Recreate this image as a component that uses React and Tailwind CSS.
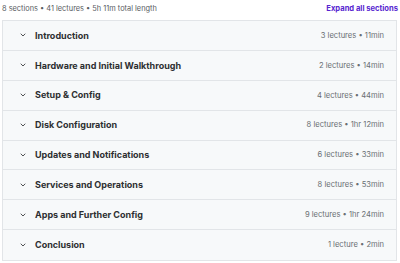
import { ChevronDown } from 'lucide-react';

const sections = [
  { title: 'Introduction', meta: '3 lectures • 11min' },
  { title: 'Hardware and Initial Walkthrough', meta: '2 lectures • 14min' },
  { title: 'Setup & Config', meta: '4 lectures • 44min' },
  { title: 'Disk Configuration', meta: '8 lectures • 1hr 12min' },
  { title: 'Updates and Notifications', meta: '6 lectures • 33min' },
  { title: 'Services and Operations', meta: '8 lectures • 53min' },
  { title: 'Apps and Further Config', meta: '9 lectures • 1hr 24min' },
  { title: 'Conclusion', meta: '1 lecture • 2min' },
];

export default function App() {
  return (
    <div className="w-[400px] h-[263px] bg-white px-[2px] pt-[2px] font-['Inter',sans-serif] text-[#2d2f31]">
      <div className="flex items-center justify-between h-[13px] mb-[5px]">
        <span className="text-[7.4px] text-[#595c5f]">8 sections • 41 lectures • 5h 11m total length</span>
        <span className="text-[7.6px] font-bold text-[#5624d0]">Expand all sections</span>
      </div>
      <div className="border border-[#e2e5e8] w-[395px]">
        {sections.map((s, i) => (
          <div key={i} className={`flex items-center justify-between h-[29.9px] bg-[#f7f9fa] pl-[16px] pr-[12px] ${i < sections.length - 1 ? 'border-b border-[#e2e5e8]' : ''}`}>
            <div className="flex items-center">
              <ChevronDown size={8} strokeWidth={2.5} className="text-[#2d2f31] mr-[8px]" />
              <span className="text-[9px] font-bold">{s.title}</span>
            </div>
            <span className="text-[7.6px] text-[#6a6f73]">{s.meta}</span>
          </div>
        ))}
      </div>
    </div>
  );
}
